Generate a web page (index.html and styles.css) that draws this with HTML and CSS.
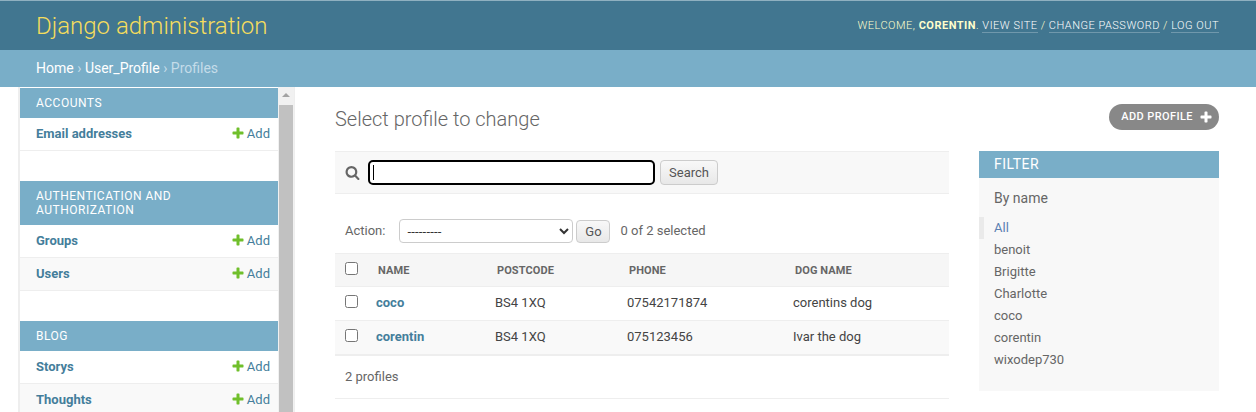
FILE: index.html
```html
<!DOCTYPE html>
<html lang="en">
<head>
  <meta charset="UTF-8" />
  <title>Select profile to change | Django site admin</title>
  <link rel="stylesheet" href="styles.css">
</head>
<body>

  <header class="site-header">
    <h1 class="branding">Django administration</h1>
    <div class="user-tools">
      Welcome, <strong>corentin</strong>.
      <a href="#">View site</a> /
      <a href="#">Change password</a> /
      <a href="#">Log out</a>
    </div>
  </header>

  <div class="breadcrumbs">
    <a href="#">Home</a> <span class="sep">›</span> <a href="#">User_Profile</a> <span class="sep">›</span> Profiles
  </div>

  <div class="main">
    <nav class="sidebar">
      <div class="sidebar-list">
        <section class="module module-gap">
          <div class="caption">Accounts</div>
          <div class="model-row"><a class="model-link" href="#">Email addresses</a><a class="add-link" href="#"><svg class="plus" viewBox="0 0 1792 1792"><path d="M1600 796v192q0 40-28 68t-68 28h-416v416q0 40-28 68t-68 28h-192q-40 0-68-28t-28-68v-416h-416q-40 0-68-28t-28-68v-192q0-40 28-68t68-28h416v-416q0-40 28-68t68-28h192q40 0 68 28t28 68v416h416q40 0 68 28t28 68z"/></svg>Add</a></div>
        </section>
        <section class="module module-gap">
          <div class="caption">Authentication and Authorization</div>
          <div class="model-row"><a class="model-link" href="#">Groups</a><a class="add-link" href="#"><svg class="plus" viewBox="0 0 1792 1792"><path d="M1600 796v192q0 40-28 68t-68 28h-416v416q0 40-28 68t-68 28h-192q-40 0-68-28t-28-68v-416h-416q-40 0-68-28t-28-68v-192q0-40 28-68t68-28h416v-416q0-40 28-68t68-28h192q40 0 68 28t28 68v416h416q40 0 68 28t28 68z"/></svg>Add</a></div>
          <div class="model-row alt"><a class="model-link" href="#">Users</a><a class="add-link" href="#"><svg class="plus" viewBox="0 0 1792 1792"><path d="M1600 796v192q0 40-28 68t-68 28h-416v416q0 40-28 68t-68 28h-192q-40 0-68-28t-28-68v-416h-416q-40 0-68-28t-28-68v-192q0-40 28-68t68-28h416v-416q0-40 28-68t68-28h192q40 0 68 28t28 68v416h416q40 0 68 28t28 68z"/></svg>Add</a></div>
        </section>
        <section class="module">
          <div class="caption">Blog</div>
          <div class="model-row"><a class="model-link" href="#">Storys</a><a class="add-link" href="#"><svg class="plus" viewBox="0 0 1792 1792"><path d="M1600 796v192q0 40-28 68t-68 28h-416v416q0 40-28 68t-68 28h-192q-40 0-68-28t-28-68v-416h-416q-40 0-68-28t-28-68v-192q0-40 28-68t68-28h416v-416q0-40 28-68t68-28h192q40 0 68 28t28 68v416h416q40 0 68 28t28 68z"/></svg>Add</a></div>
          <div class="model-row alt"><a class="model-link" href="#">Thoughts</a><a class="add-link" href="#"><svg class="plus" viewBox="0 0 1792 1792"><path d="M1600 796v192q0 40-28 68t-68 28h-416v416q0 40-28 68t-68 28h-192q-40 0-68-28t-28-68v-416h-416q-40 0-68-28t-28-68v-192q0-40 28-68t68-28h416v-416q0-40 28-68t68-28h192q40 0 68 28t28 68v416h416q40 0 68 28t28 68z"/></svg>Add</a></div>
        </section>
      </div>
      <div class="scrollbar">
        <div class="scroll-arrow"></div>
        <div class="scroll-thumb"></div>
      </div>
    </nav>

    <main class="content">
      <div class="title-row">
        <h2 class="page-title">Select profile to change</h2>
        <a class="add-button" href="#">Add profile<svg class="plus-white" viewBox="0 0 1792 1792"><path d="M1600 796v192q0 40-28 68t-68 28h-416v416q0 40-28 68t-68 28h-192q-40 0-68-28t-28-68v-416h-416q-40 0-68-28t-28-68v-192q0-40 28-68t68-28h416v-416q0-40 28-68t68-28h192q40 0 68 28t28 68v416h416q40 0 68 28t28 68z"/></svg></a>
      </div>

      <div class="changelist">
        <div class="results">
          <div class="toolbar">
            <svg class="search-icon" viewBox="0 0 1792 1792"><path d="M1216 832q0-185-131.500-316.500t-316.500-131.500-316.500 131.500-131.500 316.500 131.500 316.500 316.500 131.500 316.500-131.500 131.500-316.500zm512 832q0 52-38 90t-90 38q-54 0-90-38l-343-342q-179 124-399 124-143 0-273.500-55.500t-225-150-150-225-55.500-273.500 55.500-273.500 150-225 225-150 273.500-55.500 273.500 55.500 225 150 150 225 55.500 273.500q0 220-124 399l343 343q37 37 37 90z"/></svg>
            <span class="search-wrap"><input class="search-input" type="text"><span class="caret"></span></span>
            <button class="btn search-btn">Search</button>
          </div>

          <div class="actions">
            <span class="action-label">Action:</span>
            <select class="action-select"><option>---------</option></select>
            <button class="btn go-btn">Go</button>
            <span class="action-counter">0 of 2 selected</span>
          </div>

          <table class="result-table">
            <thead>
              <tr>
                <th class="col-check"><input type="checkbox"></th>
                <th class="col-name">Name</th>
                <th class="col-postcode">Postcode</th>
                <th class="col-phone">Phone</th>
                <th>Dog name</th>
              </tr>
            </thead>
            <tbody>
              <tr>
                <td><input type="checkbox"></td>
                <td><a class="row-link" href="#">coco</a></td>
                <td>BS4 1XQ</td>
                <td>07542171874</td>
                <td>corentins dog</td>
              </tr>
              <tr class="alt">
                <td><input type="checkbox"></td>
                <td><a class="row-link" href="#">corentin</a></td>
                <td>BS4 1XQ</td>
                <td>075123456</td>
                <td>Ivar the dog</td>
              </tr>
            </tbody>
          </table>

          <p class="paginator">2 profiles</p>
        </div>

        <aside class="filter">
          <h3 class="filter-title">Filter</h3>
          <h4 class="filter-name">By name</h4>
          <ul class="filter-list">
            <li class="selected"><a href="#">All</a></li>
            <li><a href="#">benoit</a></li>
            <li><a href="#">Brigitte</a></li>
            <li><a href="#">Charlotte</a></li>
            <li><a href="#">coco</a></li>
            <li><a href="#">corentin</a></li>
            <li><a href="#">wixodep730</a></li>
          </ul>
        </aside>
      </div>
    </main>
  </div>

</body>
</html>
```

FILE: styles.css
```css
html, body { height: 100%; }
body {
  margin: 0;
  height: 412px;
  overflow: hidden;
  display: flex;
  flex-direction: column;
  font-family: Roboto, "Liberation Sans", sans-serif;
  font-size: 13px;
  color: #333;
  background: #fff;
}
a { text-decoration: none; }

/* header */
.site-header {
  height: 49px;
  flex: none;
  border-top: 1px solid #8fb0c0;
  padding: 0 37px 0 36px;
  display: flex;
  align-items: center;
  justify-content: space-between;
  background: #417690;
  color: #ffc;
}
.branding {
  margin: 0;
  font-size: 24px;
  font-weight: 300;
  color: #f5dd5d;
}
.user-tools {
  font-size: 11px;
  font-weight: 300;
  letter-spacing: 0.5px;
  text-transform: uppercase;
}
.user-tools strong { font-weight: 700; }
.user-tools a {
  color: #fff;
  border-bottom: 1px solid rgba(255,255,255,0.25);
}
.breadcrumbs {
  height: 37px;
  flex: none;
  box-sizing: border-box;
  padding-left: 36px;
  line-height: 36px;
  font-size: 14px;
  color: #c4dce8;
  background: #79aec8;
}
.breadcrumbs a { color: #fff; }

.main {
  flex: 1;
  min-height: 0;
  display: flex;
}

/* sidebar */
.sidebar {
  width: 277px;
  box-sizing: border-box;
  flex: none;
  margin-left: 18px;
  border-left: 2px solid #eee;
  border-right: 1px solid #eee;
  display: flex;
  overflow: hidden;
}
.sidebar-list {
  width: 258px;
  flex: none;
  padding-top: 1px;
}
.module-gap { margin-bottom: 30px; }
.caption {
  padding: 8px 16px;
  background: #79aec8;
  color: #fff;
  font-size: 12px;
  line-height: 14px;
  font-weight: 400;
  letter-spacing: 0.5px;
  text-transform: uppercase;
}
.model-row {
  height: 30px;
  padding: 0 8px 2px 16px;
  display: flex;
  align-items: center;
  justify-content: space-between;
  border-bottom: 1px solid #eee;
  font-size: 13px;
}
.model-row.alt { background: #f9f9f9; }
.model-link { color: #447e9b; font-weight: 700; }
.add-link {
  display: flex;
  align-items: center;
  color: #447e9b;
}
.plus {
  width: 14px;
  height: 14px;
  margin-right: 2px;
  fill: #70bf2b;
}
.scrollbar {
  width: 16px;
  flex: none;
  box-sizing: border-box;
  padding: 0 1px 0 1px;
  background: #f1f1f1;
}
.scroll-arrow {
  width: 0;
  height: 0;
  margin: 6px auto 8px;
  border: 4px solid transparent;
  border-top: 0;
  border-bottom: 4px solid #a3a3a3;
}
.scroll-thumb {
  height: 320px;
  background: #c1c1c1;
}

/* content */
.content {
  flex: 1;
  min-width: 0;
  padding: 17px 37px 0 40px;
}
.title-row {
  display: flex;
  justify-content: space-between;
  align-items: flex-start;
  margin-bottom: 17px;
}
.page-title {
  margin: 0;
  font-size: 20px;
  line-height: 30px;
  font-weight: 300;
  color: #666;
}
.add-button {
  display: flex;
  align-items: center;
  height: 26px;
  box-sizing: border-box;
  padding: 0 6px 2px 12px;
  border-radius: 13px;
  background: #888;
  color: #fff;
  font-size: 11px;
  font-weight: 500;
  letter-spacing: 0.4px;
  text-transform: uppercase;
}
.plus-white {
  width: 14px;
  height: 14px;
  margin-left: 6px;
  margin-top: 2px;
  fill: #fff;
}
.changelist {
  display: flex;
  gap: 30px;
  align-items: flex-start;
}
.results { width: 614px; flex: none; }

.toolbar {
  height: 41px;
  padding: 0 0 0 10px;
  display: flex;
  align-items: center;
  background: #f8f8f8;
  border-top: 1px solid #eee;
  border-bottom: 1px solid #eee;
}
.search-icon {
  width: 15px;
  height: 15px;
  fill: #666;
  margin-right: 8px;
}
.search-wrap {
  position: relative;
  display: block;
  margin-right: 5px;
}
.search-input {
  display: block;
  width: 287px;
  height: 25px;
  box-sizing: border-box;
  border: 2px solid #000;
  border-radius: 5px;
  background: #fff;
  padding: 0 4px;
}
.caret {
  position: absolute;
  left: 5px;
  top: 5px;
  width: 1px;
  height: 15px;
  background: #000;
}
.btn {
  box-sizing: border-box;
  border: 1px solid #ccc;
  border-radius: 4px;
  background: linear-gradient(#f8f8f8, #e8e8e8);
  color: #555;
  font-family: inherit;
  font-size: 13px;
  padding: 0;
}
.search-btn { width: 58px; height: 25px; }

.actions {
  height: 24px;
  margin: 25px 0 10px;
  padding-left: 10px;
  display: flex;
  align-items: center;
  color: #666;
}
.action-label { margin: 0 14px 2px 0; }
.action-counter { margin-bottom: 2px; }
.action-select {
  width: 174px;
  height: 24px;
  margin-right: 3px;
  box-sizing: border-box;
  padding: 0 4px 0 3px;
  border: 1px solid #ccc;
  border-radius: 4px;
  background: #fff;
  color: #333;
  font-family: inherit;
  font-size: 13px;
  letter-spacing: 0.2px;
}
.go-btn { width: 34px; height: 23px; margin-right: 10px; }

.result-table {
  width: 614px;
  table-layout: fixed;
  border-collapse: collapse;
  border-bottom: 2px solid #eee;
}
.result-table input {
  display: block;
  margin: 0;
  width: 13px;
  height: 13px;
}
.result-table th {
  height: 33px;
  padding: 0 10px 0 12px;
  box-sizing: border-box;
  text-align: left;
  background: #f6f6f6;
  border-top: 1px solid #eee;
  border-bottom: 1px solid #eee;
  color: #666;
  font-size: 11px;
  font-weight: 700;
  letter-spacing: 0.1px;
  text-transform: uppercase;
}
.result-table td {
  height: 34px;
  padding: 0 10px 2px;
  box-sizing: border-box;
  border-bottom: 1px solid #eee;
  color: #444;
}
.result-table th.col-check { width: 31px; padding: 0 0 3px 10px; }
.result-table td:first-child { padding: 0 0 4px 10px; }
.col-name { width: 119px; }
.col-postcode { width: 132px; }
.col-phone { width: 166px; }
.result-table tr.alt td { background: #f9f9f9; }
.row-link { color: #447e9b; font-weight: 700; }

.paginator {
  margin: 0;
  height: 42px;
  padding-left: 10px;
  line-height: 42px;
  border-bottom: 1px solid #eee;
  color: #666;
}

/* filter */
.filter {
  width: 240px;
  height: 240px;
  flex: none;
  background: #f8f8f8;
}
.filter-title {
  margin: 0;
  height: 27px;
  padding-left: 15px;
  line-height: 27px;
  background: #79aec8;
  color: #fff;
  font-size: 14px;
  font-weight: 400;
  letter-spacing: 0.5px;
  text-transform: uppercase;
}
.filter-name {
  margin: 0;
  padding: 12px 15px 0;
  font-size: 14px;
  line-height: 17px;
  font-weight: 400;
  color: #666;
}
.filter-list {
  margin: 10px 0 0;
  padding: 0;
  list-style: none;
}
.filter-list li {
  height: 22px;
  line-height: 22px;
  padding-left: 15px;
}
.filter-list a { color: #666; }
.filter-list .selected {
  padding-left: 10px;
  border-left: 5px solid #eaeaea;
}
.filter-list .selected a { color: #5b80b2; }
```
